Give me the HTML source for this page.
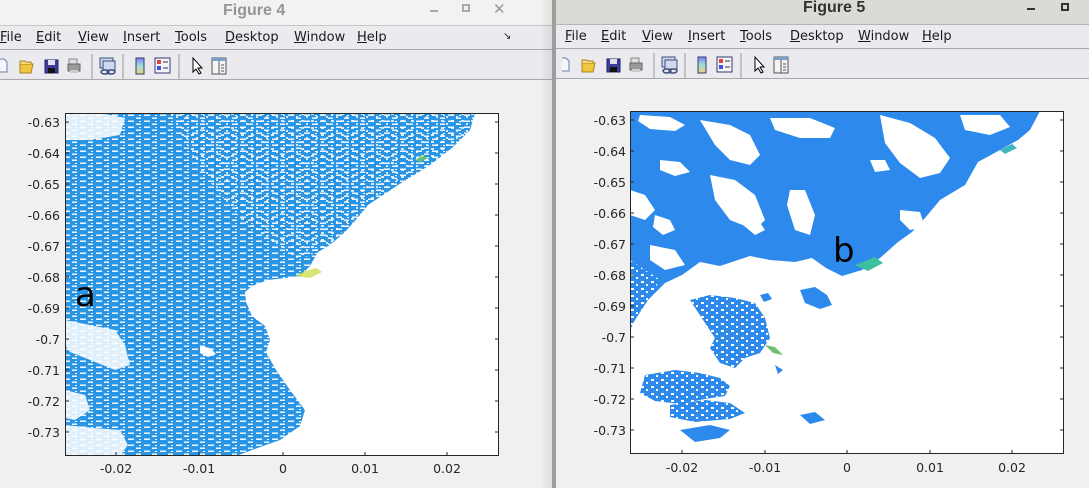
<!DOCTYPE html>
<html><head><meta charset="utf-8"><style>
*{margin:0;padding:0;box-sizing:border-box}
body{width:1089px;height:488px;overflow:hidden;background:#f0f0f0;position:relative;font-family:"Liberation Sans","DejaVu Sans",sans-serif}
.abs{position:absolute}
.menu span{position:absolute;font-size:13px;color:#1a1a1a;top:4px;font-family:"DejaVu Sans","Liberation Sans",sans-serif}
.menu u{text-decoration:underline}
.tick{font-size:12.5px;color:#262626;font-family:"DejaVu Sans","Liberation Sans",sans-serif}
</style></head><body>
<svg width="0" height="0" style="position:absolute">
<defs>
<pattern id="dash" width="16" height="6" patternUnits="userSpaceOnUse">
<rect x="0" y="0.5" width="6" height="1.4" fill="#fff"/>
<rect x="8" y="3.5" width="5" height="1.4" fill="#fff"/>
<rect x="11" y="1" width="2" height="1" fill="#fff"/>
</pattern>
<pattern id="dash2" width="12" height="6" patternUnits="userSpaceOnUse">
<rect x="0" y="0.5" width="5" height="1.6" fill="#fff"/>
<rect x="6" y="3.5" width="5" height="1.6" fill="#fff"/>
</pattern>
<pattern id="spk" width="10" height="7" patternUnits="userSpaceOnUse">
<rect x="1" y="1" width="3" height="2" fill="#fff"/>
<rect x="6" y="4" width="2" height="2" fill="#fff"/>
</pattern>
<symbol id="tb" viewBox="0 0 240 32">
<path d="M-2 9h6l3 3v10h-9z" fill="#f4f6fb" stroke="#6a7fb0"/>
<path d="M20 14h13l-2 9h-11z" fill="#f0c640" stroke="#a8861a"/><path d="M20 14v-3h5l1 1h5v2" fill="#f6dc80" stroke="#a8861a"/>
<rect x="45" y="10" width="13" height="13" fill="#3c3c9a" stroke="#222266"/><rect x="48" y="10" width="7" height="5" fill="#e0e0f0"/><rect x="48" y="18" width="7" height="5" fill="#111"/>
<rect x="69" y="9" width="8" height="6" fill="#ddd" stroke="#888"/><rect x="68" y="14" width="12" height="7" fill="#999" stroke="#666"/><rect x="70" y="20" width="8" height="3" fill="#ccc"/>
<line x1="92" y1="4" x2="92" y2="29" stroke="#999"/>
<rect x="100" y="8" width="13" height="10" fill="#cfd8ee" stroke="#3a4e7c"/><rect x="103" y="11" width="12" height="9" fill="#cfd8ee" stroke="#3a4e7c"/><ellipse cx="105" cy="22" rx="4" ry="2" fill="none" stroke="#3a4e7c" stroke-width="1.5"/><ellipse cx="111" cy="22" rx="4" ry="2" fill="none" stroke="#3a4e7c" stroke-width="1.5"/>
<line x1="123" y1="4" x2="123" y2="29" stroke="#999"/>
<defs><linearGradient id="cb" x1="0" y1="0" x2="0" y2="1"><stop offset="0" stop-color="#8080f0"/><stop offset=".5" stop-color="#a0e0d0"/><stop offset="1" stop-color="#f0d080"/></linearGradient></defs>
<rect x="136" y="8" width="8" height="16" fill="url(#cb)" stroke="#333870"/>
<rect x="155" y="8" width="15" height="15" fill="#f4f4f8" stroke="#333870"/><rect x="157" y="10" width="4" height="4" fill="#e04040"/><rect x="157" y="16" width="4" height="4" fill="#4050e0"/><line x1="163" y1="12" x2="168" y2="12" stroke="#333"/><line x1="163" y1="18" x2="168" y2="18" stroke="#333"/>
<line x1="179" y1="4" x2="179" y2="29" stroke="#999"/>
<path d="M193 8v14l3-3 3 5 2-1-3-5h4z" fill="#fff" stroke="#000"/>
<rect x="212" y="8" width="14" height="16" fill="#f4f4f4" stroke="#555"/><rect x="212" y="8" width="14" height="3" fill="#7aa0c8"/><line x1="219" y1="11" x2="219" y2="24" stroke="#555"/><line x1="221" y1="15" x2="224" y2="15" stroke="#555"/><line x1="221" y1="18" x2="224" y2="18" stroke="#555"/><line x1="221" y1="21" x2="224" y2="21" stroke="#555"/>
</symbol>
</defs></svg>

<!-- Figure 4 window -->
<div class="abs" style="left:0;top:0;width:553px;height:26px;background:#f3f2f1;border-bottom:1px solid #c9c7c3"></div>
<div class="abs" style="left:223px;top:2px;font-size:16px;font-weight:bold;color:#959595">Figure 4</div>
<div class="abs" style="left:430px;top:10px;width:8px;height:2px;background:#aaa"></div>
<div class="abs" style="left:462px;top:4px;width:8px;height:8px;border:2px solid #aaa"></div>
<div class="abs" style="left:493px;top:0px;font-size:15px;color:#999">✕</div>
<div class="abs menu" style="left:0;top:26px;width:553px;height:24px;background:#ebeaef;border-bottom:1px solid #a9a9ad">
<span style="left:0"><u>F</u>ile</span><span style="left:36px"><u>E</u>dit</span><span style="left:78px"><u>V</u>iew</span><span style="left:123px"><u>I</u>nsert</span><span style="left:175px"><u>T</u>ools</span><span style="left:225px"><u>D</u>esktop</span><span style="left:294px"><u>W</u>indow</span><span style="left:357px"><u>H</u>elp</span>
<span style="left:503px;top:5px;font-size:10px">↘</span></div>
<div class="abs" style="left:0;top:50px;width:553px;height:30px;background:#ebeaef;border-bottom:1px solid #a9a9ad">
<svg width="240" height="32" style="position:absolute;left:0;top:0"><use href="#tb"/></svg></div>
<div class="abs" style="left:540px;top:0;width:13px;height:488px;background:linear-gradient(to right,rgba(0,0,0,0),rgba(0,0,0,0.08))"></div>
<div class="abs" style="left:552px;top:0;width:4px;height:488px;background:#9e9e9e"></div>

<!-- Plot a -->
<svg class="abs" style="left:0;top:80px" width="552" height="408">
<g transform="translate(0,-80)">
<rect x="65" y="113" width="434" height="343" fill="#fff"/>
<clipPath id="ca"><rect x="65" y="113" width="434" height="343"/></clipPath>
<g clip-path="url(#ca)">
<path d="M65 113H475L470 130 452 148 430 165 398 185 368 205 360 215 345 232 330 245 318 252 310 266 300 276 285 278 268 280 252 286 245 292 246 302 252 316 265 326 270 340 266 352 276 370 290 390 305 410 300 426 280 440 252 450 236 456H65Z" fill="#2a95e5"/>
<path d="M65 113H475L470 130 452 148 430 165 398 185 368 205 360 215 345 232 330 245 318 252 310 266 300 276 285 278 268 280 252 286 245 292 246 302 252 316 265 326 270 340 266 352 276 370 290 390 305 410 300 426 280 440 252 450 236 456H65Z" fill="url(#dash)"/>
<path d="M170 113H475L470 130 452 148 430 165 398 185 368 205 330 245 300 260 250 230 200 170Z" fill="url(#spk)" opacity=".8"/>
<path d="M65 113H100L125 118 120 135 90 140 65 140Z" fill="#fff" opacity=".85"/>
<path d="M65 320L90 325 115 330 125 345 130 365 115 370 90 360 70 352 65 345Z" fill="#fff" opacity=".85"/>
<path d="M65 390L85 395 90 410 75 420 65 418Z" fill="#fff" opacity=".85"/>
<path d="M65 425L95 428 120 430 128 445 120 456H65Z" fill="#fff" opacity=".85"/>
<path d="M200 346l10 2 6 6-8 3-8-4z" fill="#fff"/>
<path d="M295 276l10-5 12-3 5 4-12 6z" fill="#c8d838" opacity=".7"/>
<path d="M415 160l8-5 5 3-8 4z" fill="#7ad050" opacity=".7"/>
</g>
<rect x="65.5" y="113.5" width="433" height="342" fill="none" stroke="#262626"/>
<g stroke="#262626">
<path d="M65 122h4M65 153h4M65 184h4M65 215h4M65 246h4M65 277h4M65 308h4M65 339h4M65 370h4M65 401h4M65 432h4"/>
<path d="M499 122h-4M499 153h-4M499 184h-4M499 215h-4M499 246h-4M499 277h-4M499 308h-4M499 339h-4M499 370h-4M499 401h-4M499 432h-4"/>
<path d="M116 456v-4M199 456v-4M283 456v-4M365 456v-4M447 456v-4"/>
</g>
<g class="tick" text-anchor="end" font-size="12.5" fill="#262626">
<text x="60" y="127">-0.63</text><text x="60" y="158">-0.64</text><text x="60" y="189">-0.65</text><text x="60" y="220">-0.66</text><text x="60" y="251">-0.67</text><text x="60" y="282">-0.68</text><text x="60" y="313">-0.69</text><text x="60" y="344">-0.7</text><text x="60" y="375">-0.71</text><text x="60" y="406">-0.72</text><text x="60" y="437">-0.73</text>
</g>
<g class="tick" text-anchor="middle" font-size="12.5" fill="#262626">
<text x="116" y="473">-0.02</text><text x="199" y="473">-0.01</text><text x="283" y="473">0</text><text x="365" y="473">0.01</text><text x="447" y="473">0.02</text>
</g>
<text x="75" y="306" font-size="34" fill="#000" font-family="DejaVu Sans, sans-serif">a</text>
</g></svg>

<!-- Figure 5 window -->
<div class="abs" style="left:556px;top:0;width:533px;height:25px;background:#dcdad5;border-bottom:1px solid #b6b4b0"></div>
<div class="abs" style="left:803px;top:-1px;font-size:16px;font-weight:bold;color:#2e3436">Figure 5</div>
<div class="abs" style="left:1027px;top:8px;width:8px;height:2px;background:#2e3436"></div>
<div class="abs" style="left:1061px;top:3px;width:8px;height:8px;border:2px solid #2e3436"></div>
<div class="abs menu" style="left:556px;top:25px;width:533px;height:24px;background:#ebeaef;border-bottom:1px solid #a9a9ad">
<span style="left:9px"><u>F</u>ile</span><span style="left:45px"><u>E</u>dit</span><span style="left:86px"><u>V</u>iew</span><span style="left:132px"><u>I</u>nsert</span><span style="left:184px"><u>T</u>ools</span><span style="left:234px"><u>D</u>esktop</span><span style="left:302px"><u>W</u>indow</span><span style="left:366px"><u>H</u>elp</span></div>
<div class="abs" style="left:556px;top:49px;width:533px;height:30px;background:#ebeaef;border-bottom:1px solid #a9a9ad">
<svg width="240" height="32" style="position:absolute;left:6px;top:0"><use href="#tb"/></svg></div>

<!-- Plot b -->
<svg class="abs" style="left:556px;top:79px" width="533" height="409">
<g transform="translate(-556,-79)">
<rect x="630" y="111" width="434" height="343" fill="#fff"/>
<clipPath id="cbp"><rect x="630" y="111" width="434" height="343"/></clipPath>
<g clip-path="url(#cbp)" fill="#2d8aec">
<path d="M630 111H1040L1030 130 1018 140 1000 150 978 162 965 185 940 200 925 218 912 232 898 242 880 258 862 270 842 276 826 268 812 258 795 262 770 260 750 256 720 266 700 262 682 275 665 283 648 300 635 320 630 330Z"/>
<path d="M630 260L660 280 648 300 635 320 630 330Z" fill="url(#spk)"/>
<g fill="#2d8aec">
<path d="M690 300l20-5 25 3 20 5 10 15 5 20-10 15-15 5-10 10-15-5-10-15 5-10-10-15z"/>
<path d="M645 375l30-5 25 3 20 5 10 8-5 10-20 3-25 5-25-3-15-8z"/>
<path d="M670 405l35-5 25 3 15 10-15 6-35 3-25-5z"/>
<path d="M680 430l30-5 20 5-10 8-25 4z"/>
</g>
<g fill="url(#spk)">
<path d="M690 300l20-5 25 3 20 5 10 15 5 20-10 15-15 5-10 10-15-5-10-15 5-10-10-15z"/>
<path d="M645 375l30-5 25 3 20 5 10 8-5 10-20 3-25 5-25-3-15-8z"/>
<path d="M670 405l35-5 25 3 15 10-15 6-35 3-25-5z"/>
</g>
<path d="M800 415l15-3 10 8-15 4z"/>
<path d="M760 295l8-2 4 6-8 3z"/>
<path d="M800 290l15-3 12 8 5 10-12 4-15-6z"/>
<path d="M775 365l8 5-5 4z"/>
<g fill="#fff">
<path d="M640 115l30 2 15 8-10 6-25-2-12-8z"/>
<path d="M700 120l30 5 20 10 10 20-10 10-20-5-15-15z"/>
<path d="M770 118l40 0 25 10-5 10-30 0-25-8z"/>
<path d="M880 115l30 8 25 15 15 20-10 15-20 5-20-15-15-20z"/>
<path d="M960 115l40 0 10 12-20 8-25-5z"/>
<path d="M660 160l20 2 10 10-15 4-15-6z"/>
<path d="M630 190l15 5 10 15-10 10-15-5z"/>
<path d="M710 175l25 5 20 15 10 25-10 10-25-10-15-20z"/>
<path d="M790 190l15 0 10 25-5 20-15-5-8-25z"/>
<path d="M655 215l15 5 5 10-12 5-10-8z"/>
<path d="M740 210l15 5 10 15-10 5-12-10z"/>
<path d="M650 245l25 5 10 15-20 5-15-10z"/>
<path d="M900 210l20 2 5 15-15 3-10-10z"/>
<path d="M870 160l15 0 5 10-15 2z"/>
<path d="M980 170l20-5 5 15-15 5z"/>
</g>
<path d="M855 265l20-8 8 6-15 8z" fill="#3cc0a0"/>
<path d="M765 345l10 2 8 8-10-2z" fill="#6cc070"/>
<path d="M1000 150l12-6 5 4-12 6z" fill="#40b8c0"/>
</g>
<rect x="630.5" y="111.5" width="433" height="342" fill="none" stroke="#262626"/>
<g stroke="#262626">
<path d="M630 120h4M630 151h4M630 182h4M630 213h4M630 244h4M630 275h4M630 306h4M630 337h4M630 368h4M630 399h4M630 430h4"/>
<path d="M1064 120h-4M1064 151h-4M1064 182h-4M1064 213h-4M1064 244h-4M1064 275h-4M1064 306h-4M1064 337h-4M1064 368h-4M1064 399h-4M1064 430h-4"/>
<path d="M682 454v-4M765 454v-4M847 454v-4M930 454v-4M1012 454v-4"/>
</g>
<g class="tick" text-anchor="end" font-size="12.5" fill="#262626">
<text x="626" y="125">-0.63</text><text x="626" y="156">-0.64</text><text x="626" y="187">-0.65</text><text x="626" y="218">-0.66</text><text x="626" y="249">-0.67</text><text x="626" y="280">-0.68</text><text x="626" y="311">-0.69</text><text x="626" y="342">-0.7</text><text x="626" y="373">-0.71</text><text x="626" y="404">-0.72</text><text x="626" y="435">-0.73</text>
</g>
<g class="tick" text-anchor="middle" font-size="12.5" fill="#262626">
<text x="682" y="472">-0.02</text><text x="765" y="472">-0.01</text><text x="847" y="472">0</text><text x="930" y="472">0.01</text><text x="1012" y="472">0.02</text>
</g>
<text x="833" y="262" font-size="34" fill="#000" font-family="DejaVu Sans, sans-serif">b</text>
</g></svg>
</body></html>
